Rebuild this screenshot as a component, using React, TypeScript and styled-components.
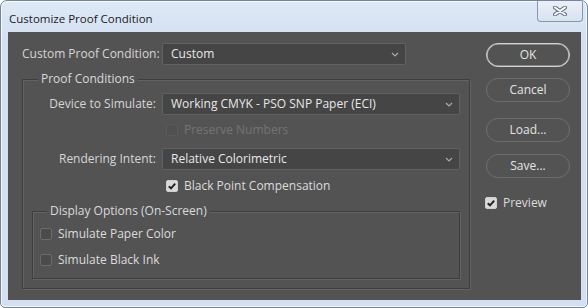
import React from 'react'
import styled, { createGlobalStyle } from 'styled-components'

const GlobalStyle = createGlobalStyle`
  html, body {
    margin: 0;
    padding: 0;
    background: #ffffff;
  }
  body {
    font-family: "Open Sans", "Noto Sans", sans-serif;
  }
`

const Window = styled.div`
  width: 588px;
  height: 308px;
  box-sizing: border-box;
  border: 1px solid #74849a;
  border-radius: 7px 7px 5px 5px;
  background: linear-gradient(#dee9f6, #d3e0f1 40px, #d3e0f1);
  box-shadow: inset 0 0 0 1px rgba(255, 255, 255, 0.75);
  display: flex;
  flex-direction: column;
  overflow: hidden;
`

const TitleBar = styled.div`
  height: 31px;
  display: flex;
  align-items: flex-start;
  justify-content: space-between;
`

const Title = styled.div`
  margin: 10px 0 0 8px;
  font-size: 11.5px;
  line-height: 16px;
  color: #1b1b1b;
`

const CloseButton = styled.div`
  width: 46px;
  height: 21px;
  margin-right: 4px;
  box-sizing: border-box;
  border: 1px solid #8797ad;
  border-top: none;
  border-radius: 0 0 4px 4px;
  background: linear-gradient(#eaf0f8, #d8e3f1);
  display: flex;
  align-items: center;
  justify-content: center;
`

const Panel = styled.div`
  margin: 0 6px 0 7px;
  height: 268px;
  box-sizing: border-box;
  background: #535353;
  display: flex;
  gap: 16px;
  padding: 11px 11px 0 14px;
  font-size: 12px;
  color: #d9d9d9;
`

const LeftColumn = styled.div`
  width: 448px;
  display: flex;
  flex-direction: column;
`

const RightColumn = styled.div`
  width: 84px;
  display: flex;
  flex-direction: column;
`

const FieldRow = styled.div<{ $top?: number }>`
  display: flex;
  align-items: center;
  gap: 6px;
  height: 22px;
  margin-top: ${({ $top }) => $top ?? 0}px;
`

const Label = styled.span<{ $w: number }>`
  width: ${({ $w }) => $w}px;
  text-align: right;
  white-space: nowrap;
  line-height: 16px;
  color: #d6d6d6;
`

const Select = styled.div<{ $w: number }>`
  width: ${({ $w }) => $w}px;
  height: 22px;
  box-sizing: border-box;
  background: #454545;
  border: 1px solid #616161;
  border-radius: 2px;
  display: flex;
  align-items: center;
  justify-content: space-between;
  padding: 0 6px 0 8px;
  color: #e8e8e8;
  line-height: 16px;
`

const Group = styled.fieldset<{ $left?: number; $top: number; $w: number; $bottom: number }>`
  margin: ${({ $top }) => $top}px 0 0 ${({ $left }) => $left ?? 0}px;
  padding: 0 0 ${({ $bottom }) => $bottom}px 0;
  width: ${({ $w }) => $w}px;
  min-inline-size: 0;
  box-sizing: border-box;
  border: 1px solid #3e3e3e;
  box-shadow: inset 1px 1px 0 #636363, 1px 1px 0 #636363;
  display: flex;
  flex-direction: column;
`

const Legend = styled.legend<{ $left: number }>`
  margin-left: ${({ $left }) => $left}px;
  padding: 0 3px;
  line-height: 16px;
  background: #535353;
  color: #dadada;
`

const CheckRow = styled.div<{ $left: number; $top: number; $disabled?: boolean }>`
  display: flex;
  align-items: center;
  gap: 6px;
  height: 16px;
  margin: ${({ $top }) => $top}px 0 0 ${({ $left }) => $left}px;
  line-height: 16px;
  color: ${({ $disabled }) => ($disabled ? '#737373' : '#dcdcdc')};
  white-space: nowrap;
`

const Box = styled.span<{ $checked?: boolean; $disabled?: boolean }>`
  width: 12px;
  height: 12px;
  box-sizing: border-box;
  border-radius: 2px;
  border: 1px solid ${({ $checked, $disabled }) => ($checked ? '#cfcfcf' : $disabled ? '#5b5b5b' : '#6b6b6b')};
  background: ${({ $checked, $disabled }) => ($checked ? '#d9d9d9' : $disabled ? '#505050' : '#4b4b4b')};
  display: flex;
  align-items: center;
  justify-content: center;
  flex: none;
`

const Button = styled.button<{ $primary?: boolean; $top: number }>`
  height: 24px;
  margin-top: ${({ $top }) => $top}px;
  border-radius: 12px;
  border: 1px solid ${({ $primary }) => ($primary ? '#d2d2d2' : '#6d6d6d')};
  box-shadow: ${({ $primary }) => ($primary ? 'inset 0 0 0 0.6px #bdbdbd' : 'none')};
  background: transparent;
  color: #e4e4e4;
  font-family: inherit;
  font-size: 12px;
  line-height: 16px;
  padding: 0;
`

const Chevron = () => (
  <svg width="8" height="5" viewBox="0 0 8 5">
    <path d="M1 1 L4 4 L7 1" fill="none" stroke="#a9a9a9" strokeWidth="1.2" />
  </svg>
)

const Check = () => (
  <svg width="10" height="10" viewBox="0 0 10 10">
    <path d="M1.8 5.2 L4 7.4 L8.2 2.6" fill="none" stroke="#222" strokeWidth="2" />
  </svg>
)

const CloseGlyph = () => (
  <svg width="14" height="10" viewBox="0 0 14 10">
    <path d="M2 1.5 L12 8.5 M12 1.5 L2 8.5" stroke="#6b7585" strokeWidth="4" strokeLinecap="round" />
    <path d="M2 1.5 L12 8.5 M12 1.5 L2 8.5" stroke="#ffffff" strokeWidth="2" strokeLinecap="round" />
  </svg>
)

const Checkbox = ({ label, checked, disabled, left, top }: {
  label: string
  checked?: boolean
  disabled?: boolean
  left: number
  top: number
}) => (
  <CheckRow $left={left} $top={top} $disabled={disabled}>
    <Box $checked={checked} $disabled={disabled}>{checked && <Check />}</Box>
    {label}
  </CheckRow>
)

export default function App() {
  return (
    <>
      <GlobalStyle />
      <Window>
        <TitleBar>
          <Title>Customize Proof Condition</Title>
          <CloseButton><CloseGlyph /></CloseButton>
        </TitleBar>

        <Panel>
          <LeftColumn>
            <FieldRow>
              <Label $w={134}>Custom Proof Condition:</Label>
              <Select $w={244}>Custom<Chevron /></Select>
            </FieldRow>

            <Group $top={6} $w={448} $bottom={9}>
              <Legend $left={15}>Proof Conditions</Legend>

              <FieldRow $top={6}>
                <Label $w={133}>Device to Simulate:</Label>
                <Select $w={298}>Working CMYK - PSO SNP Paper (ECI)<Chevron /></Select>
              </FieldRow>

              <Checkbox label="Preserve Numbers" disabled left={143} top={7} />

              <FieldRow $top={10}>
                <Label $w={133}>Rendering Intent:</Label>
                <Select $w={298}>Relative Colorimetric<Chevron /></Select>
              </FieldRow>

              <Checkbox label="Black Point Compensation" checked left={143} top={8} />

              <Group $left={9} $top={9} $w={428} $bottom={10}>
                <Legend $left={14}>Display Options (On-Screen)</Legend>
                <Checkbox label="Simulate Paper Color" left={7} top={7} />
                <Checkbox label="Simulate Black Ink" left={7} top={10} />
              </Group>
            </Group>
          </LeftColumn>

          <RightColumn>
            <Button $primary $top={0}>OK</Button>
            <Button $top={11}>Cancel</Button>
            <Button $top={16}>Load...</Button>
            <Button $top={12}>Save...</Button>
            <Checkbox label="Preview" checked left={-1} top={17} />
          </RightColumn>
        </Panel>
      </Window>
    </>
  )
}
